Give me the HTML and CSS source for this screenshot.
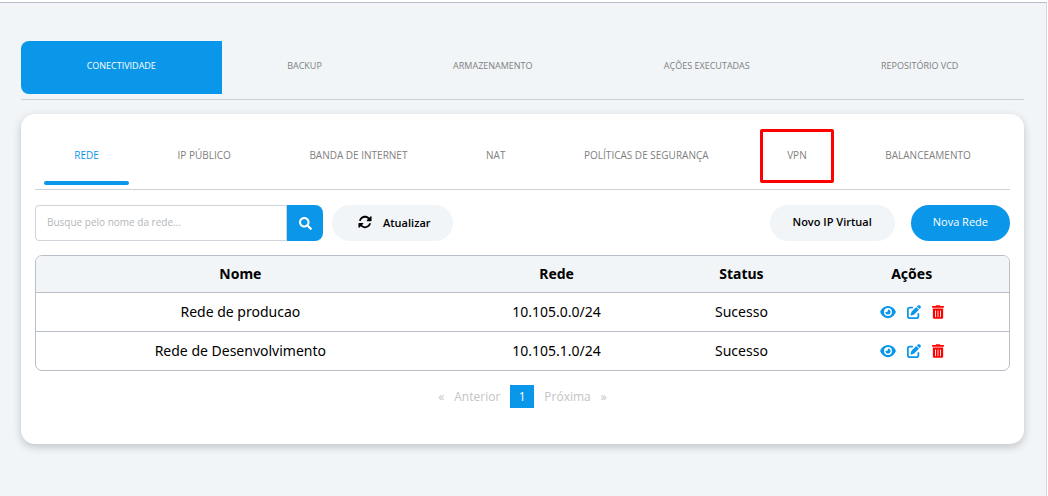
FILE: index.html
```html
<!DOCTYPE html>
<html lang="pt-BR">
<head>
    <meta charset="UTF-8">
    <meta name="viewport" content="width=device-width, initial-scale=1.0">
    <title>Conectividade - Rede</title>
    <link rel="stylesheet" href="styles.css">
</head>
<body>
    <!-- Icons used more than once on the page -->
    <svg class="sprite" aria-hidden="true">
        <symbol id="icon-eye" viewBox="0 0 576 512"><path d="M288 32c-80.8 0-145.5 36.8-192.6 80.6C48.6 156 17.3 208 2.5 243.7c-3.3 7.9-3.3 16.7 0 24.6C17.3 304 48.6 356 95.4 399.4C142.5 443.2 207.2 480 288 480s145.5-36.8 192.6-80.6c46.8-43.5 78.1-95.4 93-131.1c3.3-7.9 3.3-16.7 0-24.6c-14.9-35.7-46.2-87.7-93-131.1C433.5 68.8 368.8 32 288 32zM144 256a144 144 0 1 1 288 0 144 144 0 1 1 -288 0zm144-64c0 35.3-28.7 64-64 64c-7.1 0-13.9-1.2-20.3-3.3c-5.5-1.8-11.9 1.6-11.7 7.4c.3 6.9 1.3 13.8 3.2 20.7c13.7 51.2 66.4 81.6 117.6 67.9s81.6-66.4 67.9-117.6c-11.1-41.5-47.8-69.4-88.6-71.1c-5.8-.2-9.2 6.1-7.4 11.7c2.1 6.4 3.3 13.2 3.3 20.3z"/></symbol>
        <symbol id="icon-edit" viewBox="0 0 512 512"><path d="M471.6 21.7c-21.9-21.9-57.3-21.9-79.2 0L362.3 51.7l97.9 97.9 30.1-30.1c21.9-21.9 21.9-57.3 0-79.2L471.6 21.7zm-299.2 220c-6.1 6.1-10.8 13.6-13.5 21.9l-29.6 88.8c-2.9 8.6-.6 18.1 5.8 24.6s15.9 8.7 24.6 5.8l88.8-29.6c8.2-2.7 15.7-7.4 21.9-13.5L437.7 172.3 339.7 74.3 172.4 241.7zM96 64C43 64 0 107 0 160V416c0 53 43 96 96 96H352c53 0 96-43 96-96V320c0-17.7-14.3-32-32-32s-32 14.3-32 32v96c0 17.7-14.3 32-32 32H96c-17.7 0-32-14.3-32-32V160c0-17.7 14.3-32 32-32h96c17.7 0 32-14.3 32-32s-14.3-32-32-32H96z"/></symbol>
        <symbol id="icon-trash" viewBox="0 0 448 512"><path d="M32 464a48 48 0 0 0 48 48h288a48 48 0 0 0 48-48V128H32zm272-256a16 16 0 0 1 32 0v224a16 16 0 0 1-32 0zm-96 0a16 16 0 0 1 32 0v224a16 16 0 0 1-32 0zm-96 0a16 16 0 0 1 32 0v224a16 16 0 0 1-32 0zM432 32H312l-9.4-18.7A24 24 0 0 0 281.1 0H166.8a23.72 23.72 0 0 0-21.4 13.3L136 32H16A16 16 0 0 0 0 48v32a16 16 0 0 0 16 16h416a16 16 0 0 0 16-16V48a16 16 0 0 0-16-16z"/></symbol>
    </svg>

    <div class="page">
        <nav class="main-tabs">
            <a href="#" class="main-tab active">CONECTIVIDADE</a>
            <a href="#" class="main-tab">BACKUP</a>
            <a href="#" class="main-tab">ARMAZENAMENTO</a>
            <a href="#" class="main-tab">AÇÕES EXECUTADAS</a>
            <a href="#" class="main-tab">REPOSITÓRIO VCD</a>
        </nav>

        <main class="card">
            <nav class="sub-tabs">
                <a href="#" class="sub-tab active">REDE</a>
                <a href="#" class="sub-tab">IP PÚBLICO</a>
                <a href="#" class="sub-tab">BANDA DE INTERNET</a>
                <a href="#" class="sub-tab">NAT</a>
                <a href="#" class="sub-tab">POLÍTICAS DE SEGURANÇA</a>
                <a href="#" class="sub-tab highlight">VPN</a>
                <a href="#" class="sub-tab">BALANCEAMENTO</a>
            </nav>

            <div class="toolbar">
                <form class="search">
                    <input type="text" class="search-input" placeholder="Busque pelo nome da rede..." aria-label="Busque pelo nome da rede">
                    <button type="submit" class="search-button" aria-label="Buscar">
                        <svg class="icon" viewBox="0 0 512 512"><path d="M505 442.7L405.3 343c-4.5-4.5-10.6-7-17-7H372c27.6-35.3 44-79.7 44-128C416 93.1 322.9 0 208 0S0 93.1 0 208s93.1 208 208 208c48.3 0 92.7-16.4 128-44v16.3c0 6.4 2.5 12.5 7 17l99.7 99.7c9.4 9.4 24.6 9.4 33.9 0l28.3-28.3c9.4-9.4 9.4-24.6.1-34zM208 336c-70.7 0-128-57.2-128-128 0-70.7 57.2-128 128-128 70.7 0 128 57.2 128 128 0 70.7-57.2 128-128 128z"/></svg>
                    </button>
                </form>
                <button type="button" class="btn btn-refresh">
                    <svg class="icon" viewBox="0 0 512 512"><path d="M142.9 142.9c62.2-62.2 162.7-62.5 225.3-1L327 183c-6.9 6.9-8.9 17.2-5.2 26.2s12.5 14.8 22.2 14.8H472c13.3 0 24-10.7 24-24V72c0-9.7-5.8-18.5-14.8-22.2s-19.3-1.7-26.2 5.2L413.4 96.6c-87.6-86.5-228.7-86.2-315.8 1C73.2 122 55.6 150.7 44.8 181.4c-5.9 16.7 2.9 34.9 19.5 40.8s34.9-2.9 40.8-19.5c7.7-21.8 20.2-42.3 37.8-59.8zM16 312V440c0 9.7 5.8 18.5 14.8 22.2s19.3 1.7 26.2-5.2l41.6-41.6c87.6 86.5 228.7 86.2 315.8-1c24.4-24.4 42.1-53.1 52.9-83.7c5.9-16.7-2.9-34.9-19.5-40.8s-34.9 2.9-40.8 19.5c-7.7 21.8-20.2 42.3-37.8 59.8c-62.2 62.2-162.7 62.5-225.3 1L185 329c6.9-6.9 8.9-17.2 5.2-26.2s-12.5-14.8-22.2-14.8H40c-13.3 0-24 10.7-24 24z"/></svg>
                    Atualizar
                </button>
                <div class="toolbar-right">
                    <button type="button" class="btn">Novo IP Virtual</button>
                    <button type="button" class="btn btn-primary">Nova Rede</button>
                </div>
            </div>

            <table class="network-table">
                <thead>
                    <tr>
                        <th class="col-name">Nome</th>
                        <th class="col-network">Rede</th>
                        <th class="col-status">Status</th>
                        <th class="col-actions">Ações</th>
                    </tr>
                </thead>
                <tbody>
                    <tr>
                        <td>Rede de producao</td>
                        <td>10.105.0.0/24</td>
                        <td>Sucesso</td>
                        <td>
                            <div class="actions">
                                <button type="button" class="action" aria-label="Visualizar"><svg class="icon icon-eye"><use href="#icon-eye"/></svg></button>
                                <button type="button" class="action" aria-label="Editar"><svg class="icon"><use href="#icon-edit"/></svg></button>
                                <button type="button" class="action delete" aria-label="Excluir"><svg class="icon icon-trash"><use href="#icon-trash"/></svg></button>
                            </div>
                        </td>
                    </tr>
                    <tr>
                        <td>Rede de Desenvolvimento</td>
                        <td>10.105.1.0/24</td>
                        <td>Sucesso</td>
                        <td>
                            <div class="actions">
                                <button type="button" class="action" aria-label="Visualizar"><svg class="icon icon-eye"><use href="#icon-eye"/></svg></button>
                                <button type="button" class="action" aria-label="Editar"><svg class="icon"><use href="#icon-edit"/></svg></button>
                                <button type="button" class="action delete" aria-label="Excluir"><svg class="icon icon-trash"><use href="#icon-trash"/></svg></button>
                            </div>
                        </td>
                    </tr>
                </tbody>
            </table>

            <nav class="pagination" aria-label="Paginação">
                <a href="#" class="page-link">«</a>
                <a href="#" class="page-link">Anterior</a>
                <a href="#" class="page-link current">1</a>
                <a href="#" class="page-link">Próxima</a>
                <a href="#" class="page-link">»</a>
            </nav>
        </main>
    </div>
</body>
</html>
```
FILE: styles.css
```css
*,
*::after {
    box-sizing: border-box;
}
body {
    margin: 0;
    padding: 2px 1px 0 0;
    background-color: #ffffff;
    font-family: "Open Sans", "Noto Sans", sans-serif;
    color: #000000;
}
a {
    text-decoration: none;
}
button {
    font-family: inherit;
    border: none;
    padding: 0;
    cursor: pointer;
}
.sprite {
    display: none;
}
.icon {
    display: block;
    width: 14px;
    height: 14px;
    fill: currentColor;
}
.page {
    min-height: calc(100vh - 2px);
    padding: 38px 22px 40px 21px;
    background-color: #f1f5f8;
    border-top: 1px solid #b9bdcd;
    border-right: 1px solid #d5d8dc;
}

/* Main tabs */
.main-tabs {
    display: flex;
    padding-bottom: 5px;
    border-bottom: 1px solid #cdd1d5;
}
.main-tab {
    flex: 1 1 auto;
    line-height: 49px;
    padding-bottom: 4px;
    text-align: center;
    font-size: 9px;
    color: #808080;
}
.main-tab.active {
    background-color: #0a97ea;
    color: #ffffff;
    border-radius: 8px 0 0 8px;
}

.card {
    margin-top: 14px;
    padding: 15px 14px 36px;
    background-color: #ffffff;
    border-radius: 14px;
    box-shadow: 0 3px 8px rgba(0, 0, 0, 0.2);
}

/* Tabs inside the card */
.sub-tabs {
    display: flex;
    padding-bottom: 4px;
    border-bottom: 1px solid #cdd1d5;
}
.sub-tab {
    position: relative;
    flex: 1 1 auto;
    height: 56px;
    line-height: 53px;
    text-align: center;
    font-size: 10px;
    color: #808080;
}
.sub-tab.active {
    color: #0a97ea;
}
.sub-tab.active::after {
    content: "";
    position: absolute;
    left: 9px;
    right: 9px;
    bottom: 0;
    height: 4px;
    background-color: #0a97ea;
    border-radius: 2px;
}
/* Red frame around the tab */
.sub-tab.highlight::after {
    content: "";
    position: absolute;
    left: 12px;
    right: 12px;
    top: 0;
    height: 54px;
    border: 3px solid #ff0000;
    border-radius: 2px;
}

/* Search and buttons */
.toolbar {
    display: flex;
    align-items: center;
    margin: 15px 0 14px;
}
.search {
    display: flex;
    width: 288px;
    height: 36px;
}
.search-input {
    flex: 1;
    min-width: 0;
    padding: 0 11px 2px;
    border: 1px solid #ced4da;
    border-radius: 4px 0 0 4px;
    font-family: inherit;
    font-size: 10px;
}
.search-input::placeholder {
    color: #b4b7bb;
}
.search-button {
    display: flex;
    align-items: center;
    justify-content: center;
    width: 36px;
    background-color: #0a97ea;
    color: #ffffff;
    border-radius: 0 8px 8px 0;
}
.search-button .icon {
    width: 13px;
    height: 13px;
}
.btn {
    height: 36px;
    padding: 0 23px 3px;
    background-color: #f1f5f8;
    border-radius: 18px;
    font-size: 11px;
    font-weight: 600;
    color: #000000;
}
.btn-primary {
    padding: 0 22px 3px;
    background-color: #0a97ea;
    color: #ffffff;
    font-weight: 500;
}
.btn-refresh {
    display: flex;
    align-items: center;
    gap: 11px;
    margin-left: 9px;
    padding: 0 22px 2px 26px;
}
.toolbar-right {
    display: flex;
    gap: 16px;
    margin-left: auto;
}

/* Table */
.network-table {
    width: 100%;
    table-layout: fixed;
    border: 1px solid #b9bfc7;
    border-radius: 7px;
    border-spacing: 0;
    overflow: hidden;
    font-family: "Noto Sans", "Open Sans", sans-serif;
    font-size: 14px;
    line-height: 20px;
    text-align: center;
}
.network-table th {
    padding: 8px 0;
    background-color: #f1f5f8;
}
.network-table td {
    padding: 9px 0;
    border-top: 1px solid #b9bfc7;
}
.col-network {
    width: 23%;
}
.col-status {
    width: 15%;
}
.col-actions {
    width: 20%;
}
.actions {
    display: flex;
    align-items: center;
    justify-content: center;
    gap: 11px;
}
.action {
    background: none;
    color: #0a97ea;
}
.action .icon-eye {
    width: 16px;
}
.action .icon-trash {
    width: 12px;
}
.action.delete {
    color: #ff0000;
}

/* Pagination */
.pagination {
    display: flex;
    justify-content: center;
    gap: 10px;
    margin-top: 14px;
    font-size: 12px;
    line-height: 23px;
}
.page-link {
    color: #c4c4c4;
}
.page-link.current {
    width: 24px;
    text-align: center;
    background-color: #0a97ea;
    color: #ffffff;
}
```
